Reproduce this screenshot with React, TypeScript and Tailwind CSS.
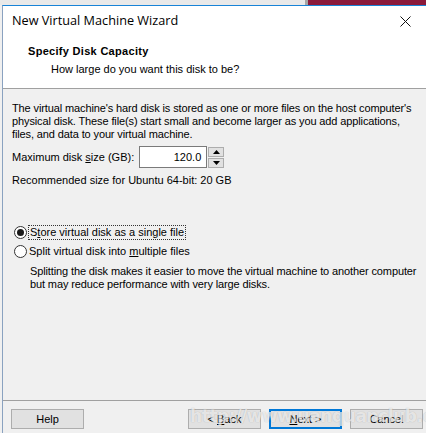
import React from "react";

const ui = "font-['Liberation_Sans',Arial,sans-serif] text-[11px] text-black";

function Radio({ checked }: { checked?: boolean }) {
  return (
    <span className="w-[13px] h-[13px] rounded-full border border-[#333] bg-white flex items-center justify-center shrink-0">
      {checked && <span className="w-[7px] h-[7px] rounded-full bg-[#1a1a1a]" />}
    </span>
  );
}

function Btn({ children, primary }: { children: React.ReactNode; primary?: boolean }) {
  return (
    <div
      className={`w-[73px] h-[20px] flex items-center justify-center bg-[#e1e1e1] border ${
        primary ? "border-[#0078d7] border-2" : "border-[#adadad]"
      }`}
    >
      {children}
    </div>
  );
}

export default function App() {
  return (
    <div className={`${ui} w-[426px] h-[433px] bg-[#f0f0f0] relative overflow-hidden flex flex-col`}>
      {/* strip of the window behind */}
      <div className="h-[5px] flex shrink-0">
        <div className="flex-1 bg-[#e9e9e9]" />
        <div className="w-[3px] bg-[#a6a6a6]" />
        <div className="w-[118px] bg-[#8b1a3b]" />
      </div>

      <div className="flex-1 flex flex-col border-t border-[#1883d7] ml-[2px] border-l border-l-[#8aa2c0]">
        {/* title bar */}
        <div className="h-[28px] bg-white flex items-center justify-between pl-[9px] pr-[12px] pt-[2px] shrink-0">
          <span className="font-['Open_Sans',sans-serif] text-[12.7px] text-black">New Virtual Machine Wizard</span>
          <svg width="11" height="11" viewBox="0 0 11 11" className="mr-[3px]">
            <path d="M0.5 0.5 L10.5 10.5 M10.5 0.5 L0.5 10.5" stroke="#111" strokeWidth="1" />
          </svg>
        </div>

        {/* header */}
        <div className="h-[55px] bg-white border-b border-[#a0a0a0] pl-[25px] pt-[11px] shrink-0">
          <div className="font-bold leading-[13px] tracking-[0.3px]">Specify Disk Capacity</div>
          <div className="pl-[23px] mt-[5px] leading-[13px]">How large do you want this disk to be?</div>
        </div>

        {/* body */}
        <div className="flex-1 flex flex-col pl-[9px] pt-[13px] leading-[13px]">
          <p className="tracking-[-0.12px]">
            The virtual machine's hard disk is stored as one or more files on the host computer's
            <br />
            physical disk. These file(s) start small and become larger as you add applications,
            <br />
            files, and data to your virtual machine.
          </p>

          <div className="flex items-center mt-[5px]">
            <span>
              Maximum disk <span className="underline">s</span>ize (GB):
            </span>
            <div className="ml-[5px] w-[68px] h-[22px] bg-white border border-[#7a7a7a] flex items-center justify-end pr-[5px]">
              120.0
            </div>
            <div className="flex flex-col gap-[1px] ml-[1px]">
              <div className="w-[16px] h-[10px] bg-[#e1e1e1] border border-[#adadad] flex items-center justify-center">
                <svg width="7" height="4" viewBox="0 0 7 4">
                  <path d="M0 4 L3.5 0 L7 4 Z" fill="#000" />
                </svg>
              </div>
              <div className="w-[16px] h-[10px] bg-[#e1e1e1] border border-[#adadad] flex items-center justify-center">
                <svg width="7" height="4" viewBox="0 0 7 4">
                  <path d="M0 0 L3.5 4 L7 0 Z" fill="#000" />
                </svg>
              </div>
            </div>
          </div>

          <div className="mt-[6px]">Recommended size for Ubuntu 64-bit: 20 GB</div>

          <div className="flex items-center mt-[39px] pl-[2px] gap-[2px]">
            <Radio checked />
            <span className="outline-1 outline-dotted outline-[#333] px-[1px]">
              S<span className="underline">t</span>ore virtual disk as a single file
            </span>
          </div>
          <div className="flex items-center mt-[6px] pl-[2px] gap-[2px]">
            <Radio />
            <span>
              Split virtual disk into <span className="underline">m</span>ultiple files
            </span>
          </div>
          <p className="pl-[18px] mt-[7px] tracking-[-0.12px]">
            Splitting the disk makes it easier to move the virtual machine to another computer
            <br />
            but may reduce performance with very large disks.
          </p>
        </div>

        {/* footer */}
        <div className="border-t border-[#a0a0a0] h-[33px] flex items-start pt-[8px] pl-[8px] pr-[3px] shrink-0">
          <Btn>Help</Btn>
          <div className="flex-1" />
          <div className="flex gap-[8px]">
            <Btn>
              &lt; <span className="underline ml-[3px]">B</span>ack
            </Btn>
            <Btn primary>
              <span className="underline">N</span>ext &gt;
            </Btn>
            <Btn>Cancel</Btn>
          </div>
        </div>
      </div>

      {/* watermark */}
      <div className="absolute left-[190px] top-[404px] font-['DejaVu_Sans',sans-serif] font-bold text-[17px] text-white/70 tracking-tight [text-shadow:0_0_1px_rgba(0,0,0,0.25)]">
        http://www.uanquanclub.cn
      </div>
    </div>
  );
}
